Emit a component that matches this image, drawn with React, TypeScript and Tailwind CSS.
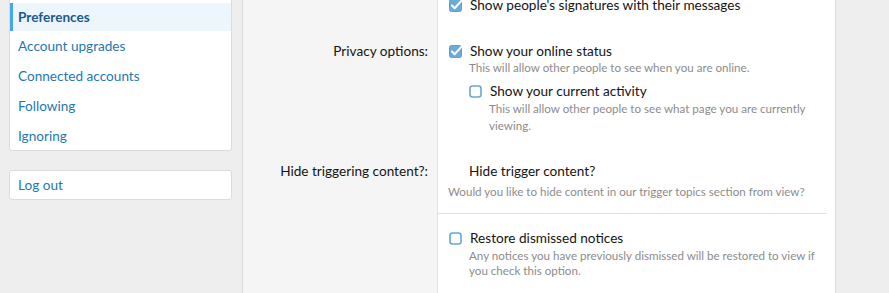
import React from "react";

const font = { fontFamily: "Lato, 'Noto Sans', sans-serif" };

function Checked() {
  return (
    <svg width="14" height="13" viewBox="0 0 14 13" className="shrink-0">
      <rect x="0.5" y="0.5" width="12" height="12" rx="2" fill="#6aabdc" stroke="#5d9fd3" />
      <path d="M3 6.5 L5.6 9.2 L12.6 1.6" fill="none" stroke="#fff" strokeWidth="2" strokeLinecap="round" strokeLinejoin="round" />
    </svg>
  );
}

function Unchecked() {
  return (
    <svg width="14" height="13" viewBox="0 0 14 13" className="shrink-0">
      <rect x="1" y="1" width="11" height="11" rx="2.5" fill="#fff" stroke="#6aa6d6" strokeWidth="1.6" />
    </svg>
  );
}

const navItems = ["Account upgrades", "Connected accounts", "Following", "Ignoring"];

function Label({ text, pt }: { text?: string; pt: string }) {
  return (
    <div className="w-[195px] shrink-0 bg-[#f5f5f5] border-r border-[#e2e2e2] pr-[9px] text-right text-[13.6px] text-[#141414]">
      {text && <div className={`${pt} leading-[20px]`}>{text}</div>}
    </div>
  );
}

export default function App() {
  return (
    <div className="w-[889px] h-[293px] overflow-hidden bg-[#eeeeee] flex" style={font}>
      {/* Sidebar */}
      <div className="w-[242px] shrink-0 pl-[9px] pr-[10px]">
        <div className="h-[151px] bg-white rounded-b-[3px] border border-t-0 border-[#dcdcdc] overflow-hidden">
          <div className="mt-[3px] h-[28px] flex items-center bg-[#edf6fd] border-l-[3px] border-[#47a7eb] pl-[5px] text-[13.6px] font-bold text-[#1d5a8c]">
            Preferences
          </div>
          {navItems.map((item) => (
            <div key={item} className="h-[30px] flex items-center pl-[8px] text-[13.6px] text-[#2577b1]">
              {item}
            </div>
          ))}
        </div>
        <div className="mt-[19px] h-[30px] bg-white rounded-[3px] border border-[#dcdcdc] flex items-center pl-[8px] text-[13.6px] text-[#2577b1]">
          Log out
        </div>
      </div>

      {/* Main form */}
      <div className="w-[594px] shrink-0 border-l border-r border-[#dcdcdc] flex flex-col -mt-[5px]">
        <div className="flex">
          <Label pt="pt-0" />
          <div className="flex-1 bg-white pl-[11px]">
            <div className="flex items-center gap-[7px] h-[20px] text-[13.6px] text-[#141414]">
              <Checked />
              Show people's signatures with their messages
            </div>
          </div>
        </div>

        <div className="flex">
          <Label text="Privacy options:" pt="pt-[26px]" />
          <div className="flex-1 bg-white pl-[11px] pt-[26px] pr-[14px]">
            <div className="flex items-center gap-[7px] h-[20px] text-[13.6px] text-[#141414]">
              <Checked />
              Show your online status
            </div>
            <div className="pl-[20px] text-[11.6px] leading-[14px] text-[#8c8c8c]">
              This will allow other people to see when you are online.
            </div>
            <div className="pl-[20px] pt-[6px]">
              <div className="flex items-center gap-[7px] h-[20px] text-[13.6px] text-[#141414]">
                <Unchecked />
                Show your current activity
              </div>
              <div className="-mt-[1px] pl-[20px] text-[11.6px] leading-[17px] text-[#8c8c8c]">
                This will allow other people to see what page you are currently viewing.
              </div>
            </div>
          </div>
        </div>

        <div className="flex">
          <Label text="Hide triggering content?:" pt="pt-[27px]" />
          <div className="flex-1 bg-white">
            <div className="pl-[10px] pb-[13px] border-b border-[#e2e2e2] mr-[8px]">
              <div className="pt-[27px] pl-[21px] leading-[20px] text-[13.6px] text-[#141414]">Hide trigger content?</div>
              <div className="pt-[3px] text-[11.6px] leading-[16px] text-[#8c8c8c] whitespace-nowrap">
                Would you like to hide content in our trigger topics section from view?
              </div>
            </div>
            <div className="pl-[11px] pt-[14px] pr-[15px] pb-[20px]">
              <div className="flex items-center gap-[7px] h-[20px] text-[13.6px] text-[#141414]">
                <Unchecked />
                Restore dismissed notices
              </div>
              <div className="pl-[20px] text-[11.6px] leading-[15px] text-[#8c8c8c]">
                Any notices you have previously dismissed will be restored to view if you check this option.
              </div>
            </div>
          </div>
        </div>
      </div>
    </div>
  );
}
